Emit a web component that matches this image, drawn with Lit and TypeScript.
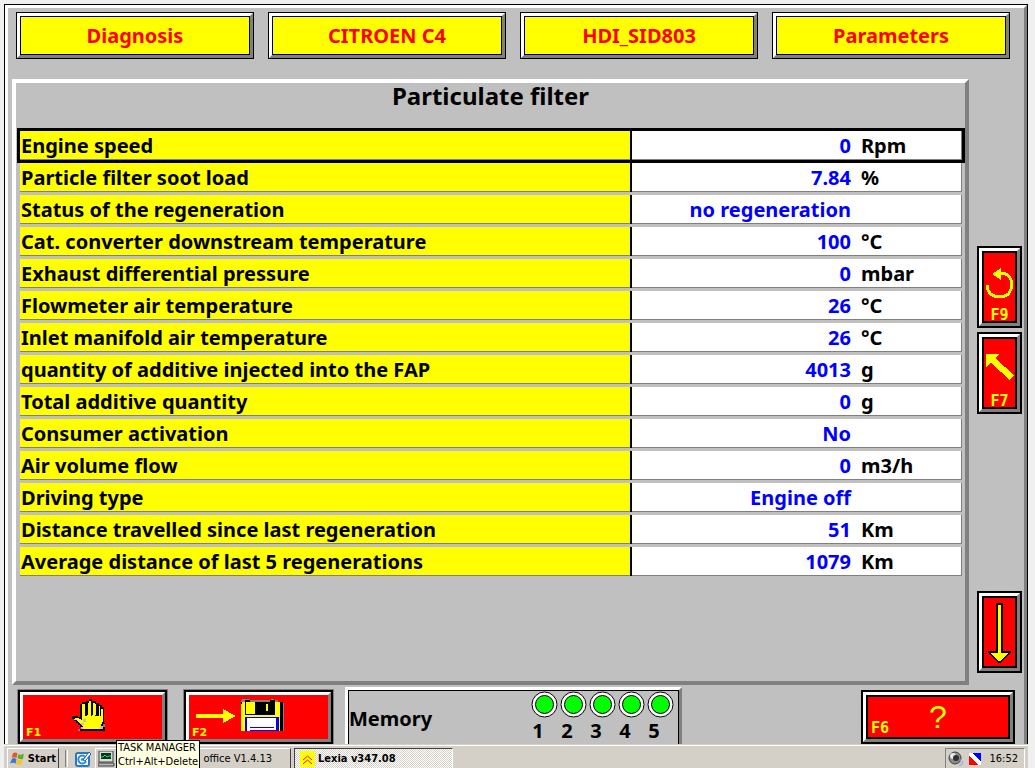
import { LitElement, html, css, svg, nothing } from "lit";
import { customElement } from "lit/decorators.js";
import { classMap } from "lit/directives/class-map.js";

interface Reading {
  label: string;
  value: string;
  unit: string;
}

const TABS = ["Diagnosis", "CITROEN C4", "HDI_SID803", "Parameters"];

const READINGS: Reading[] = [
  { label: "Engine speed", value: "0", unit: "Rpm" },
  { label: "Particle filter soot load", value: "7.84", unit: "%" },
  { label: "Status of the regeneration", value: "no regeneration", unit: "" },
  { label: "Cat. converter downstream temperature", value: "100", unit: "°C" },
  { label: "Exhaust differential pressure", value: "0", unit: "mbar" },
  { label: "Flowmeter air temperature", value: "26", unit: "°C" },
  { label: "Inlet manifold air temperature", value: "26", unit: "°C" },
  { label: "quantity of additive injected into the FAP", value: "4013", unit: "g" },
  { label: "Total additive quantity", value: "0", unit: "g" },
  { label: "Consumer activation", value: "No", unit: "" },
  { label: "Air volume flow", value: "0", unit: "m3/h" },
  { label: "Driving type", value: "Engine off", unit: "" },
  { label: "Distance travelled since last regeneration", value: "51", unit: "Km" },
  { label: "Average distance of last 5 regenerations", value: "1079", unit: "Km" },
];

const icon = (w: number, h: number, body: unknown, crisp = true) => html`
  <svg width=${w} height=${h} viewBox="0 0 ${w} ${h}" aria-hidden="true"
    shape-rendering=${crisp ? "crispEdges" : "auto"}>${body}</svg>`;

const ICONS = {
  undo: icon(28, 31, svg`
    <path d="M13 5.500H19L23 8L25.500 13V20L22.500 26L18 28.500H9L4 25.500L1.500 21V17" fill="none" stroke="#ff0" stroke-width="3"/>
    <path d="M6 6L15 0V12Z" fill="#ff0"/>`),
  upLeft: icon(28, 26, svg`<path d="M0 0H13L9 4L28 21L24 26L5 9L0 13Z" fill="#ff0"/>`),
  down: icon(23, 60, svg`
    <path d="M8 0H15V49H8ZM0 48H23V50L12 60H11L0 50Z" fill="#000"/>
    <path d="M2 50H21L12 58H11Z" fill="#ff0"/>
    <path d="M10 2H13V52H10Z" fill="#ff0"/>`),
  hand: icon(33, 32, svg`
    <path d="M8 5H10V3H14V2H17V0H20V2H24V4H27V6H30V8H32V24H33V32H7V30H9V28H8V26H6V24H4V22H2V20H0V17H6V18H8Z" fill="#000"/>
    <path d="M10 5H13V17H15V4H18V17H20V4H23V17H25V7H28V17H29V10H31V22L28 28V30H11V28L8 25L4 21L2 19H6L10 21Z" fill="#ff0"/>
    <path d="M17 2H19V17H17ZM23 5H24V16H23Z" fill="#ff0"/>
    <path d="M14 4H16V16H14ZM19 3H21V16H19ZM25 6H27V17H25Z" fill="#000"/>
    <path d="M11 20H14V23H11ZM9 24H12V26H9ZM28 27H31V30H28ZM2 20H4V21H2ZM9 28H11V30H9Z" fill="#c0c0c0"/>
    <path d="M6 30H8V32H6ZM31 25H33V28H31Z" fill="#808080"/>`),
  save: icon(88, 32, svg`
    <path d="M0 15H27V10L40 17L27 24V19H0Z" fill="#ff0"/>
    <path d="M45 3H84V32H45Z" fill="#ff0"/>
    <path d="M46 0H54V1H75V0H78V1H82V3H45V1H46Z" fill="#808080"/>
    <path d="M49 1H54V3H74V1H79V16H49ZM84 3H87V32H84ZM45 3H46V5H45Z" fill="#000"/>
    <path d="M50 3H59V15H50ZM70 5H72V12H70Z" fill="#ff0"/>
    <path d="M87 4H88V32H87Z" fill="#808080"/>
    <path d="M49 18H83V32H49Z" fill="#00f"/>
    <path d="M51 19H80V32H51Z" fill="#fff"/>
    <path d="M54 28H78V29H54ZM54 31H80V32H54Z" fill="#00f"/>`),
  led: icon(27, 27, svg`
    <circle cx="13.500" cy="13.500" r="12.500" fill="#fff" stroke="#000"/>
    <circle cx="13.500" cy="13.500" r="9" fill="#0f0" stroke="#000"/>`, false),
  flag: icon(16, 16, svg`
    <path d="M3 2Q6 0 8 2L7 7Q4 5 2 7Z" fill="#e8552c"/>
    <path d="M9 3Q12 4 15 2L14 8Q11 9 8 7Z" fill="#5fae32"/>
    <path d="M2 8Q4 6 7 8L6 13Q3 11 0 13Z" fill="#3b78d8"/>
    <path d="M8 8Q11 10 14 9L12 14Q9 15 6 13Z" fill="#f6c22c"/>`, false),
  browser: icon(16, 16, svg`
    <rect x="1" y="2" width="13" height="13" rx="2" fill="#fff" stroke="#2a78c0" stroke-width="2"/>
    <path d="M11 10A4 4 0 1 1 11 7L6 9" fill="none" stroke="#2a8ad8" stroke-width="2"/>
    <path d="M8 9L14 1L16 3L10 10Z" fill="#fff" stroke="#1c5ea8"/>`, false),
  monitor: icon(17, 16, svg`
    <path d="M1 0H15V11H1Z" fill="#dcdcdc" stroke="#404040"/>
    <path d="M3 2H13V8H3Z" fill="#003818"/>
    <path d="M3 6H5L7 4L9 6L11 5H13" fill="none" stroke="#2ee060"/>
    <path d="M0 12H16V15H0Z" fill="#b8b8b8" stroke="#404040"/>`, false),
  lexia: icon(15, 16, svg`
    <path d="M0 0H15V16H0Z" fill="#ff0"/>
    <path d="M3 9L7.500 5L12 9M3 13L7.500 9L12 13" fill="none" stroke="#f01010"/>`, false),
  speaker: icon(17, 16, svg`
    <ellipse cx="7" cy="7" rx="6" ry="6" fill="#8a8a8a" stroke="#404040"/>
    <ellipse cx="5" cy="5" rx="3" ry="3" fill="#e8e8e8"/>
    <ellipse cx="8" cy="7" rx="3" ry="3" fill="#303030"/>
    <path d="M10 13Q13 12 13 8M11 15Q15 14 15 10" fill="none" stroke="#9a9ae0"/>`, false),
  network: icon(12, 12, svg`
    <path d="M0 0H12V12H0Z" fill="#fff"/>
    <path d="M3 0H12V9Z" fill="#00f"/>
    <path d="M0 3L9 12H0Z" fill="#f00"/>`),
};

@customElement("function-key")
export class FunctionKey extends LitElement {
  static properties = { key: { type: String }, label: { type: String }, kind: { type: String } };
  declare key: string;
  declare label: string;
  declare kind: string;

  static styles = css`
    :host { display: flex; }
    .key {
      flex: 1;
      display: flex;
      box-sizing: border-box;
      margin: 2px;
      padding: 0;
      border: 3px solid;
      border-color: #fff #808080 #808080 #fff;
      background: #f00;
      color: #ff0;
      box-shadow: 0 0 0 2px #000, inset 0 0 0 2px #000;
      font: 700 15px/16px "DejaVu Sans Mono", monospace;
      overflow: hidden;
    }
    .side { flex-direction: column; align-items: center; padding: 17px 0 0; height: 78px; }
    .side .art { height: 40px; display: flex; flex-direction: column; }
    .arrow { padding-top: 7px; }
    .arrow .art { height: 60px; }
    .wide, .flat { display: grid; align-items: center; }
    .wide .name, .flat .name { grid-area: 1 / 1; align-self: end; justify-self: start; }
    .wide .art, .flat .art { grid-area: 1 / 1; justify-self: center; }
    .wide { padding: 3px 5px; }
    .flat {
      padding: 0 3px;
      box-shadow: 0 0 0 2px #000, 0 0 0 3px #808080;
      font: 700 11px/12px "DejaVu Sans", sans-serif;
    }
    .flat .art { padding: 0 9px 4px 0; }
    .save .art { padding-right: 37px; }
    .mark { font: 32px/36px "Liberation Sans", Arial, sans-serif; }
    .art svg { display: block; }
  `;

  render() {
    return html`<button class="key ${this.kind}" aria-label=${this.label}>
      ${this.kind.startsWith("side")
        ? html`<span class="art"><slot></slot></span>${this.key ? html`<span class="name">${this.key}</span>` : nothing}`
        : html`<span class="name">${this.key}</span><span class="art mark"><slot></slot></span>`}
    </button>`;
  }
}

@customElement("app-root")
export class AppRoot extends LitElement {
  static styles = css`
    :host {
      display: flex;
      flex-direction: column;
      box-sizing: border-box;
      min-height: 100vh;
      padding: 4px 7px 0 4px;
      background: #f0f0f0;
      color: #000;
      font: 700 20px/28px "Noto Sans", Tahoma, sans-serif;
    }
    svg { display: block; }
    .window { flex: 1; display: flex; flex-direction: column; border: 1px solid #000; border-bottom: 0; }
    .frame {
      flex: 1;
      display: flex;
      flex-direction: column;
      border: 3px solid;
      border-color: #fff #808080 #808080 #fff;
      border-bottom: 0;
      background: #c0c0c0;
    }
    .tabs { display: grid; grid-template-columns: repeat(4, 1fr); gap: 16px; padding: 5px 15px 0 9px; }
    .tab {
      height: 45px;
      padding: 0;
      border: 3px solid;
      border-color: #fff #808080 #808080 #fff;
      background: #ff0;
      color: #f00;
      box-shadow: 0 0 0 1px #000, inset 0 0 0 1px #000;
      font: inherit;
    }
    .main { flex: 1; display: flex; margin-top: 21px; padding-left: 4px; }
    .panel {
      flex: 1;
      border: 4px solid;
      border-color: #fff #808080 #808080 #fff;
    }
    .title { margin: 0; padding-bottom: 19px; text-align: center; font-size: 24px; line-height: 26px; }
    .readings { padding: 0 3px 0 4px; }
    table { width: 100%; table-layout: fixed; border-collapse: separate; border-spacing: 0 3px; }
    .col-label { width: 65%; }
    .col-unit { width: 111px; }
    th, td { height: 28px; padding: 1px 0 0; white-space: nowrap; box-shadow: inset 0 -1px #808080; background: #fff; }
    th { padding-left: 1px; border-right: 2px solid #000; background: #ff0; text-align: left; }
    .value { color: #00f; text-align: right; }
    .unit { padding-left: 10px; box-shadow: inset -1px -1px #808080; }
    .selected { outline: 3px solid #000; }
    .side { width: 45px; display: flex; flex-direction: column; gap: 4px; padding: 167px 2px 12px 8px; }
    .last { margin-top: auto; }
    .footer { display: flex; align-items: flex-start; height: 59px; padding: 0 9px 0 10px; }
    .footer function-key { height: 54px; margin-top: 5px; }
    .f1, .f2 { width: 149px; margin-right: 17px; }
    .f2 { margin-right: 12px; }
    .f6 { width: 154px; margin-left: auto; }
    .memory {
      flex: 0 1 337px;
      box-sizing: border-box;
      display: flex;
      align-items: center;
      justify-content: space-between;
      height: 57px;
      margin-top: 2px;
      padding: 0 5px 0 1px;
      border: 3px solid;
      border-color: #fff #808080 #808080 #fff;
      border-bottom: 0;
      box-shadow: inset 1px 1px #000, inset -1px 0 #000;
    }
    .memory-label { padding-top: 3px; }
    .leds { display: flex; gap: 2px; margin: 0; padding: 0; list-style: none; }
    .led { line-height: 26px; }
    .num { display: block; width: 14px; text-align: center; }
    .taskbar {
      display: flex;
      align-items: flex-start;
      height: 24px;
      box-sizing: border-box;
      padding: 2px 3px 0;
      border-top: 1px solid #d4d0c8;
      background: #d4d0c8;
      box-shadow: inset 0 1px #fff;
      font: 11px/20px "DejaVu Sans Condensed", Tahoma, sans-serif;
    }
    .task {
      display: flex;
      align-items: center;
      box-sizing: border-box;
      height: 21px;
      margin-top: 1px;
      padding: 0 2px;
      gap: 3px;
      border: 1px solid;
      border-color: #fff #404040 #d4d0c8 #fff;
      background: #d4d0c8;
      color: #000;
      font: inherit;
      white-space: nowrap;
    }
    .start { width: 52px; font-weight: 700; }
    .divider { width: 1px; height: 17px; margin: 3px 6px 0; border-left: 1px solid #808080; border-right: 1px solid #fff; }
    .quick { display: flex; gap: 3px; }
    .plain { border-color: transparent; padding: 0; }
    .hover { position: relative; width: 24px; }
    .tip {
      position: absolute;
      left: 20px;
      bottom: -1px;
      z-index: 1;
      padding: 0 1px;
      border: 1px solid #000;
      border-bottom: 0;
      background: #ffffe1;
      text-align: left;
      line-height: 14px;
    }
    .office { width: 172px; justify-content: flex-end; padding-right: 18px; }
    .lexia {
      width: 159px;
      margin-left: 3px;
      padding-left: 5px;
      border-color: #404040 #fff #d4d0c8 #404040;
      background: repeating-conic-gradient(#fff 0 25%, #d4d0c8 0 50%) 0 0 / 2px 2px;
      font-weight: 700;
    }
    .tray {
      display: flex;
      align-items: center;
      height: 20px;
      margin: 1px 0 0 auto;
      padding: 0 6px 0 2px;
      gap: 4px;
      border: 1px solid;
      border-color: #808080 #fff #d4d0c8 #808080;
    }
    .clock { padding-left: 4px; }
  `;

  render() {
    return html`
      <div class="window"><div class="frame">
        <nav class="tabs">${TABS.map((t) => html`<button class="tab">${t}</button>`)}</nav>
        <div class="main">
          <section class="panel">
            <h1 class="title">Particulate filter</h1>
            <div class="readings">
              <table>
                <colgroup><col class="col-label"><col><col class="col-unit"></colgroup>
                <tbody>${READINGS.map((r, i) => html`
                  <tr class=${classMap({ selected: i === 0 })}>
                    <th scope="row">${r.label}</th>
                    <td class="value">${r.value}</td>
                    <td class="unit">${r.unit}</td>
                  </tr>`)}
                </tbody>
              </table>
            </div>
          </section>
          <aside class="side">
            <function-key kind="side" key="F9" label="Back">${ICONS.undo}</function-key>
            <function-key kind="side" key="F7" label="Previous">${ICONS.upLeft}</function-key>
            <function-key class="last" kind="side arrow" key="" label="Down">${ICONS.down}</function-key>
          </aside>
        </div>
        <footer class="footer">
          <function-key class="f1" kind="flat" key="F1" label="Stop">${ICONS.hand}</function-key>
          <function-key class="f2" kind="flat save" key="F2" label="Save">${ICONS.save}</function-key>
          <div class="memory">
            <span class="memory-label">Memory</span>
            <ol class="leds">${[1, 2, 3, 4, 5].map((n) => html`
              <li class="led">${ICONS.led}<span class="num">${n}</span></li>`)}
            </ol>
          </div>
          <function-key class="f6" kind="wide" key="F6" label="Help">?</function-key>
        </footer>
      </div></div>
      <div class="taskbar">
        <button class="task start">${ICONS.flag}Start</button>
        <span class="divider"></span>
        <div class="quick">
          <button class="task plain" aria-label="Browser">${ICONS.browser}</button>
          <button class="task hover" aria-label="Task manager">${ICONS.monitor}
            <span class="tip" role="tooltip">TASK MANAGER<br>Ctrl+Alt+Delete</span>
          </button>
        </div>
        <button class="task office">office V1.4.13</button>
        <button class="task lexia">${ICONS.lexia}Lexia v347.08</button>
        <div class="tray">${ICONS.speaker}${ICONS.network}<span class="clock">16:52</span></div>
      </div>`;
  }
}
